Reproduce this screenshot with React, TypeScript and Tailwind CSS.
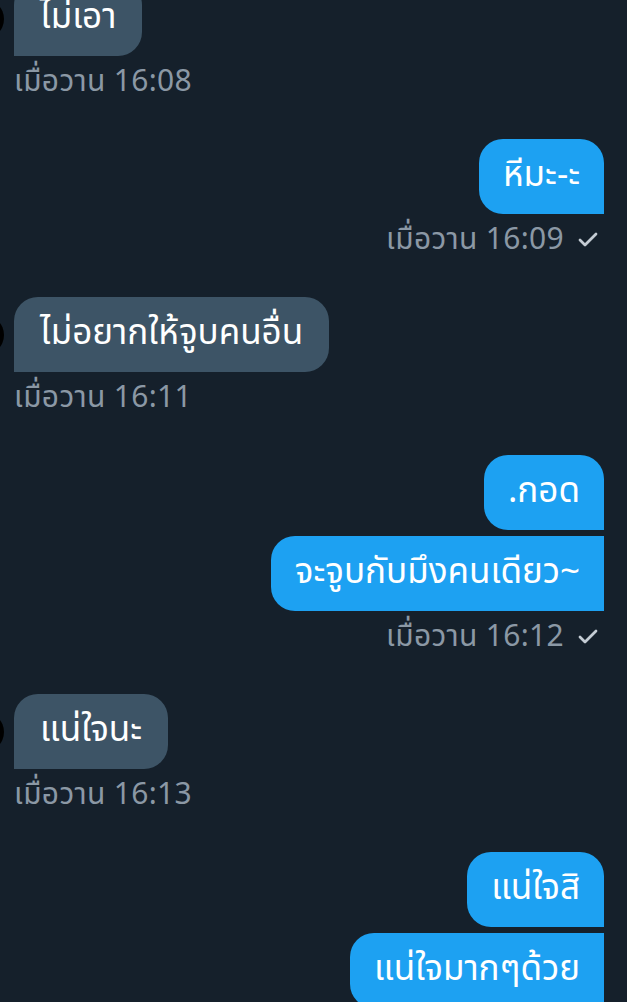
import { Check } from "lucide-react";

type Msg = { text: string; mine: boolean };
type Group = { mine: boolean; items: string[]; time: string };

const groups: Group[] = [
  { mine: false, items: ["ไม่เอา"], time: "เมื่อวาน 16:08" },
  { mine: true, items: ["หีมะ-ะ"], time: "เมื่อวาน 16:09" },
  { mine: false, items: ["ไม่อยากให้จูบคนอื่น"], time: "เมื่อวาน 16:11" },
  { mine: true, items: [".กอด", "จะจูบกับมึงคนเดียว~"], time: "เมื่อวาน 16:12" },
  { mine: false, items: ["แน่ใจนะ"], time: "เมื่อวาน 16:13" },
  { mine: true, items: ["แน่ใจสิ", "แน่ใจมากๆด้วย"], time: "" },
];

export default function App() {
  return (
    <div
      className="h-[1002px] overflow-hidden bg-[#15202b] text-white"
      style={{ fontFamily: '"Noto Sans Thai", "Noto Sans Thai Looped", "Noto Sans", "DejaVu Sans", sans-serif' }}
    >
      <div className="mt-[-19px] flex flex-col gap-[41px]">
        {groups.map((group, gi) => (
          <div key={gi} className={group.mine ? "flex flex-col items-end pr-[23px]" : "flex flex-col items-start pl-[14px]"}>
            <div className={group.mine ? "flex flex-col items-end gap-[6px]" : "flex flex-col items-start gap-[6px]"}>
              {group.items.map((text, i) => (
                <Bubble key={i} msg={{ text, mine: group.mine }} first={i === 0} />
              ))}
            </div>
            {group.time ? (
              <div className="mt-[10px] flex h-[32px] items-center gap-[12px] text-[30px] tracking-[0.3px] text-[#8b98a5]">
                <span>{group.time}</span>
                {group.mine ? <Check className="mr-[4px] h-[24px] w-[24px] text-[#c4ccd4]" strokeWidth={2.75} /> : null}
              </div>
            ) : null}
          </div>
        ))}
      </div>
    </div>
  );
}

function Bubble({ msg, first }: { msg: Msg; first: boolean }) {
  if (!msg.mine) {
    return (
      <div className="relative flex items-center">
        <span className="absolute left-[-50px] h-[40px] w-[40px] rounded-full bg-black" />
        <div className="flex h-[75px] items-center rounded-[24px] rounded-bl-none bg-[#3d5466] px-[26px] text-[35px]">
          {msg.text}
        </div>
      </div>
    );
  }
  return (
    <div
      className={
        first
          ? "flex h-[75px] items-center rounded-[24px] rounded-br-none bg-[#1da1f2] px-[24px] text-[35px]"
          : "flex h-[75px] items-center rounded-[24px] rounded-r-none bg-[#1da1f2] px-[24px] text-[35px]"
      }
    >
      {msg.text}
    </div>
  );
}
